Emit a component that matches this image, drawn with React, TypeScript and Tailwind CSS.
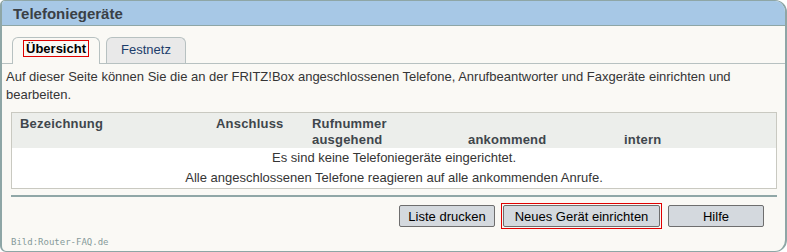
export default function App() {
  return (
    <div className="w-[787px] h-[252px] bg-white font-['Liberation_Sans',Arial,sans-serif]">
      <div className="h-[252px] flex flex-col bg-[#faf9f5] border border-l-2 border-r-2 border-[#8ea6a6] rounded-tl-[5px] rounded-tr-[12px] rounded-bl-[6px] rounded-br-[12px] overflow-hidden">
        <div className="h-[25px] shrink-0 bg-[#a7c8e6] border-b border-[#8ea6a6] pl-[11px] flex items-center text-[15px] leading-none font-bold text-[#3a4046]">
          Telefoniegeräte
        </div>

        <div className="mt-[12px] h-[26px] shrink-0 flex items-end pl-[10px] border-b border-[#b7c1c1]">
          <div className="-mb-px h-[27px] w-[88px] rounded-t-[6px] border border-b-0 border-[#b7c1c1] bg-[#faf9f5] pt-[2px] flex justify-center">
            <span className="h-[17px] w-[66px] border border-[#e00000] flex items-center justify-center text-[13px] leading-none font-bold text-black">
              Übersicht
            </span>
          </div>
          <div className="ml-[6px] h-[26px] w-[80px] rounded-t-[6px] border border-b-0 border-[#b7c1c1] bg-[#e9e9e9] pt-[3px] flex justify-center">
            <span className="h-[17px] flex items-center text-[13px] leading-none text-[#1c3d6b]">Festnetz</span>
          </div>
        </div>

        <p className="mt-[4px] px-[4px] text-[13px] leading-[18px] text-[#353535]">
          Auf dieser Seite können Sie die an der FRITZ!Box angeschlossenen Telefone, Anrufbeantworter und Faxgeräte einrichten und bearbeiten.
        </p>

        <div className="mt-[8px] ml-[9px] mr-[8px] border border-[#c9c9c1] bg-white">
          <div className="bg-[#eceeeb] pt-[3px] grid grid-cols-[196px_96px_156px_156px_1fr] pl-[8px] text-[13px] leading-[16px] font-bold tracking-[0.2px] text-[#3f464c]">
            <div>Bezeichnung</div>
            <div>Anschluss</div>
            <div className="col-span-3">Rufnummer</div>
            <div></div>
            <div></div>
            <div>ausgehend</div>
            <div>ankommend</div>
            <div>intern</div>
          </div>
          <div className="text-center text-[13px] leading-[20px] text-[#353535]">
            <div>Es sind keine Telefoniegeräte eingerichtet.</div>
            <div>Alle angeschlossenen Telefone reagieren auf alle ankommenden Anrufe.</div>
          </div>
        </div>

        <div className="mt-[6px] ml-[9px] mr-[8px] h-[2px] bg-[#90a7a7]"></div>

        <div className="mt-[8px] pr-[21px] flex justify-end items-center gap-[6px] text-[13px] leading-none text-black">
          <button className="h-[22px] w-[96px] bg-[#d4d9de] border border-[#6e6e6e] rounded-[2px]">Liste drucken</button>
          <div className="border border-[#e00000] p-px -my-[2px]">
            <button className="h-[22px] w-[157px] bg-[#d4d9de] border border-[#6e6e6e] rounded-[2px] block">Neues Gerät einrichten</button>
          </div>
          <button className="h-[22px] w-[96px] bg-[#d4d9de] border border-[#6e6e6e] rounded-[2px]">Hilfe</button>
        </div>

        <div className="mt-auto mb-[4px] pl-[9px] font-['DejaVu_Sans_Mono',monospace] text-[9px] leading-[10px] text-[#86999a]">
          Bild:Router-FAQ.de
        </div>
      </div>
    </div>
  );
}
